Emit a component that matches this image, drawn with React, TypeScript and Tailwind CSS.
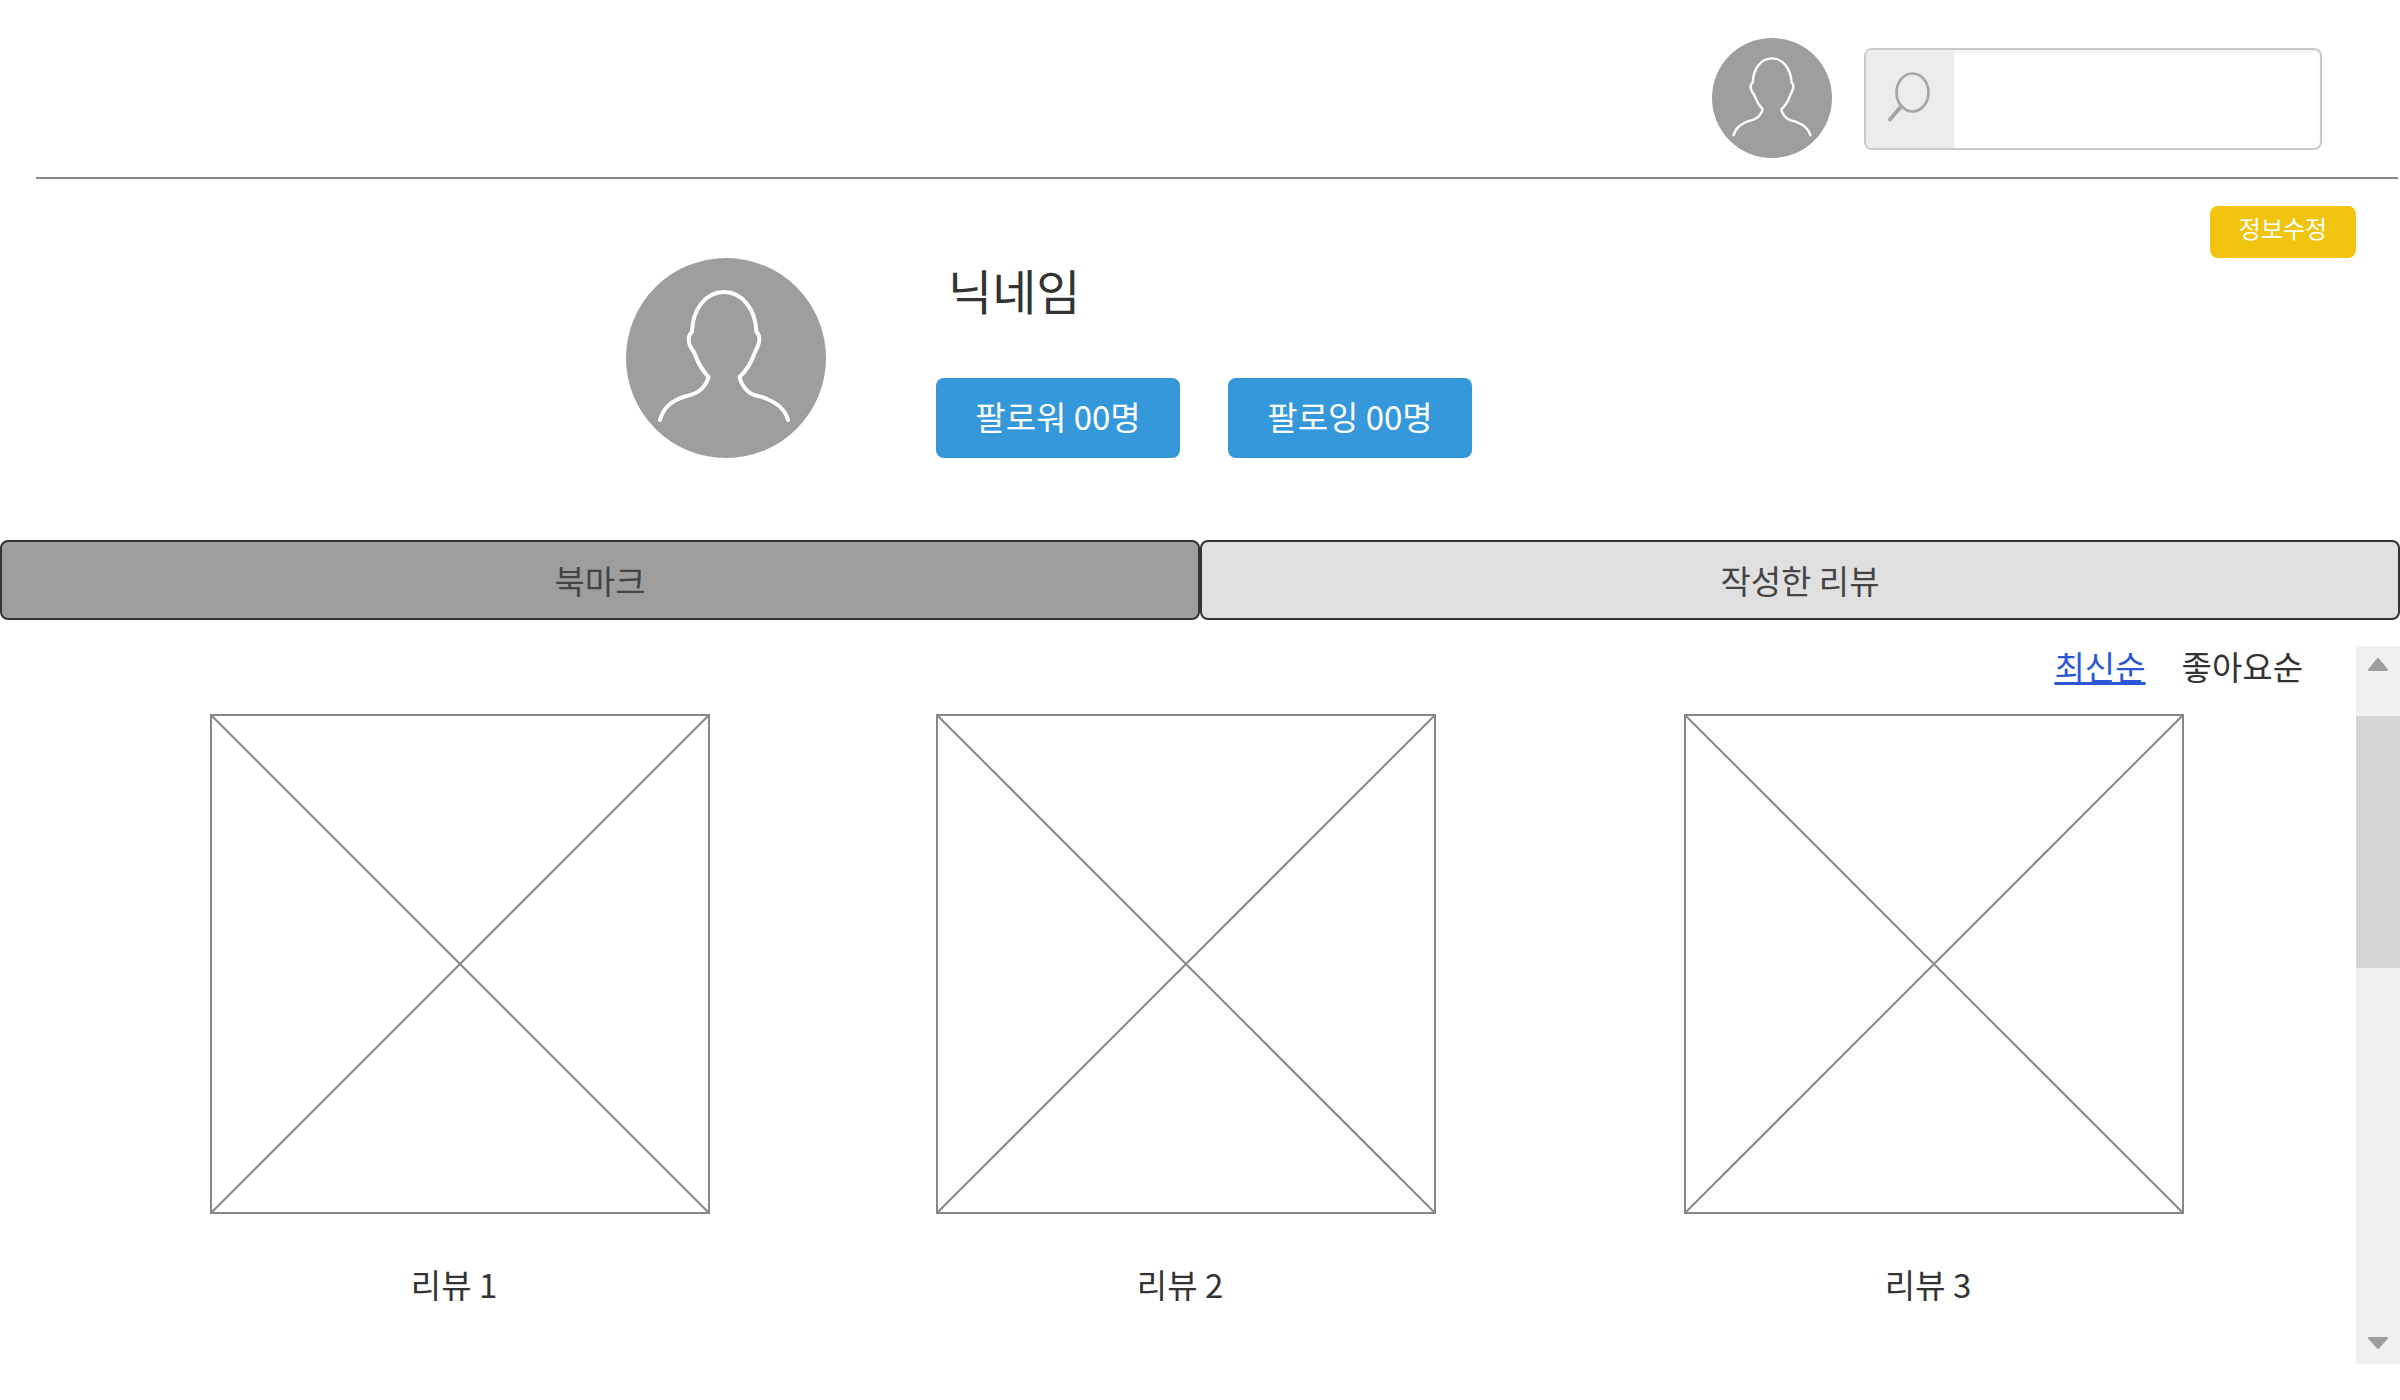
import { useState } from "react";

const reviews = ["리뷰 1", "리뷰 2", "리뷰 3"];

const tabs = [
  { id: "bookmark", label: "북마크", style: "bg-[#9e9e9e] text-[#444444]" },
  { id: "written", label: "작성한 리뷰", style: "bg-[#e0e0e0] text-[#444444]" },
];

function Avatar({ className, viewBox }: { className: string; viewBox: string }) {
  return (
    <svg
      className={`shrink-0 rounded-full bg-[#9e9e9e] ${className}`}
      viewBox={viewBox}
      fill="none"
      stroke="#ffffff"
      strokeWidth="4"
      strokeLinecap="round"
      strokeLinejoin="round"
      role="img"
      aria-label="프로필"
    >
      <path d="M34 162C38 148 47 142 59 138.500C66 136.500 71 136 76 130.500C80 126 82 122 82.500 119C76 112 72 105 69 96.500C68.500 94 66 92 64 87.500C62 83 62 77 66 74C66.500 51 80 34 98 34C116 34 129.500 51 130.500 74C134 77 134 83 132 87.500C130 92 129 94 128 96.500C125 105 120 113 113.500 119C114.500 125 120 134 128 137C133 138.500 136 138.500 141 141C151 145 159 151 162 162" />
    </svg>
  );
}

function SearchIcon() {
  return (
    <svg className="h-[60px] w-12" viewBox="0 0 48 60" fill="none" stroke="#a6a6a6" aria-hidden="true">
      <ellipse cx="26.500" cy="23.500" rx="16" ry="19" strokeWidth="2.700" />
      <path d="M15 37.500L4 50.500" strokeWidth="4" strokeLinecap="round" />
    </svg>
  );
}

function Placeholder() {
  return (
    <svg
      className="block aspect-square w-full max-w-[500px] border-2 border-[#888888]"
      viewBox="0 0 496 496"
      stroke="#888888"
      strokeWidth="2"
      aria-hidden="true"
    >
      <path d="M0 0L496 496M496 0L0 496" />
    </svg>
  );
}

function Arrow({ d }: { d: string }) {
  return (
    <svg className="h-[14px] w-5" viewBox="0 0 20 14" fill="#9e9e9e" stroke="#9e9e9e" strokeWidth="2" strokeLinejoin="round" aria-hidden="true">
      <path d={d} />
    </svg>
  );
}

export default function App() {
  const [query, setQuery] = useState("");

  return (
    <div className="bg-white font-['Noto_Sans_CJK_KR',sans-serif] text-[33px] leading-[48px] text-[#333333]">
      <header>
        <div className="flex items-center justify-end gap-8 pt-[38px] pr-[78px] pb-[19px]">
          <Avatar className="size-[120px]" viewBox="-2 0 200 200" />
          <label className="mt-0.5 flex h-[102px] w-[458px] overflow-hidden rounded-lg border-2 border-[#c9c9c9]">
            <span className="flex w-[88px] shrink-0 items-center justify-center bg-[#ececec]">
              <SearchIcon />
            </span>
            <input
              type="search"
              aria-label="검색"
              value={query}
              onChange={(e) => setQuery(e.target.value)}
              className="min-w-0 flex-1 px-4 shadow-[inset_0_3px_3px_#f3f3f3] outline-none"
            />
          </label>
        </div>
        <hr className="mr-0.5 ml-9 h-0.5 border-0 bg-[#888888]" />
      </header>

      <main>
        <section className="grid grid-cols-[626fr_1774fr] pt-[27px]">
          <div className="col-start-2 flex justify-between pr-11">
            <div className="flex gap-[110px] pt-[52px]">
              <Avatar className="size-[200px]" viewBox="0 0 200 200" />
              <div className="flex flex-col justify-between">
                <h1 className="pl-3 text-5xl leading-[62px]">닉네임</h1>
                <div className="flex gap-12">
                  <button type="button" className="h-20 w-[244px] rounded-lg bg-[#3498db] pb-1 text-white">
                    팔로워 00명
                  </button>
                  <button type="button" className="h-20 w-[244px] rounded-lg bg-[#3498db] pb-1 text-white">
                    팔로잉 00명
                  </button>
                </div>
              </div>
            </div>
            <button
              type="button"
              className="h-[52px] w-[146px] rounded-lg bg-[#f1c40f] pb-2 text-2xl text-white"
            >
              정보수정
            </button>
          </div>
        </section>

        <div className="mt-[82px] grid grid-cols-2">
          {tabs.map((tab) => (
            <button
              key={tab.id}
              type="button"
              className={`h-20 rounded-lg border-2 border-[#333333] ${tab.style}`}
            >
              {tab.label}
            </button>
          ))}
        </div>

        <section className="mt-[26px] flex">
          <div className="flex-1">
            <nav className="flex justify-end gap-9 pr-[53px] pb-7 leading-[40px]">
              <a href="#latest" className="text-[#2b56d6] underline">
                최신순
              </a>
              <a href="#likes">좋아요순</a>
            </nav>
            <div className="grid grid-cols-[726fr_748fr_882fr]">
              {reviews.map((title) => (
                <figure key={title} className="pl-[210px]">
                  <Placeholder />
                  <figcaption className="max-w-[500px] pt-[46px] pr-3 text-center">{title}</figcaption>
                </figure>
              ))}
            </div>
          </div>

          <div className="flex h-[718px] w-11 flex-col bg-[#f0f0f0]">
            <button type="button" aria-label="위로" className="flex h-[70px] justify-center pt-3">
              <Arrow d="M10 1L19 12H1Z" />
            </button>
            <div className="h-[252px] bg-[#d5d5d5]" />
            <button type="button" aria-label="아래로" className="mt-auto flex h-11 items-end justify-center pb-[14px]">
              <Arrow d="M10 12L19 2H1Z" />
            </button>
          </div>
        </section>
      </main>
    </div>
  );
}
